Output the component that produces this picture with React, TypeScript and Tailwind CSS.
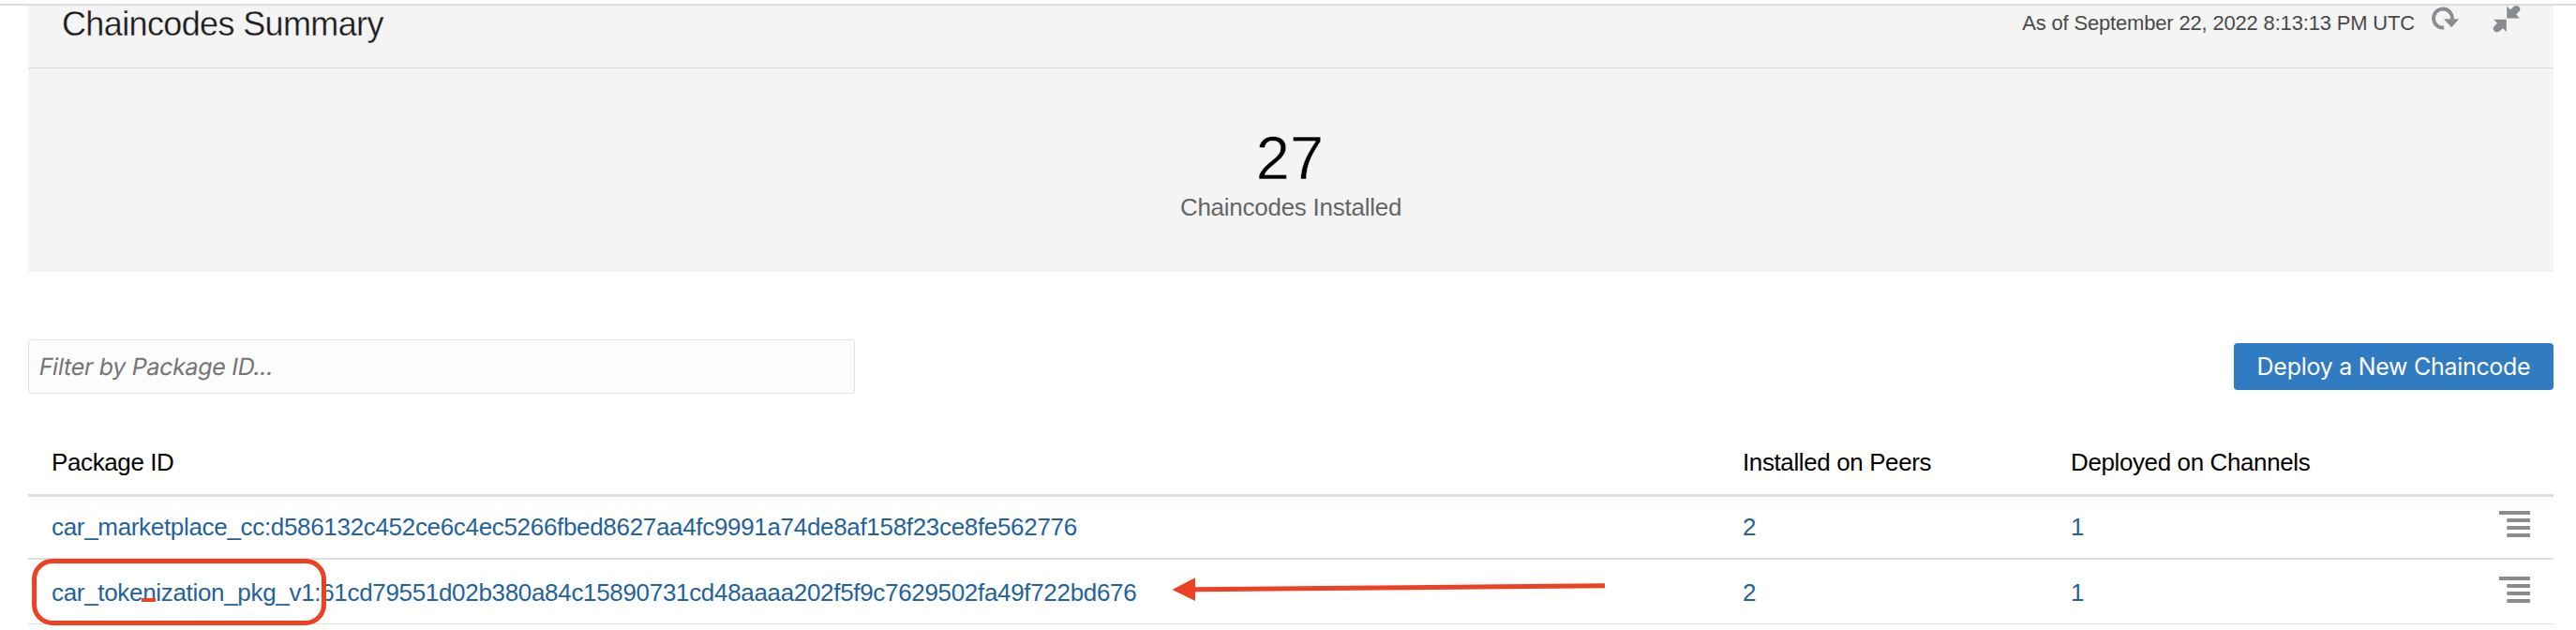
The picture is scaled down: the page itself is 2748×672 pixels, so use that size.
import React from "react";

const rows = [
  {
    id: "car_marketplace_cc:d586132c452ce6c4ec5266fbed8627aa4fc9991a74de8af158f23ce8fe562776",
    peers: 2,
    channels: 1,
    rowClass: "h-[67px] border-b-2 border-[#dfdfdf] pt-[17px]",
  },
  {
    id: "car_tokenization_pkg_v1:61cd79551d02b380a84c15890731cd48aaaa202f5f9c7629502fa49f722bd676",
    peers: 2,
    channels: 1,
    rowClass: "h-[69px] border-b border-[#dfdfdf] pt-5",
  },
];

function RefreshIcon() {
  return (
    <svg className="h-[26px] w-[30px] shrink-0" viewBox="0 0 30 26" fill="none">
      <path d="M13.2 23.5A10 10 0 1 1 22 14.5" stroke="#898d92" strokeWidth="3.9" />
      <path d="M13 14.3H29L21.2 23.2Z" fill="#898d92" />
    </svg>
  );
}

function CollapseIcon() {
  return (
    <svg className="h-[29px] w-[30px] shrink-0" viewBox="0 0 30 29" fill="#898d92">
      <path d="M15.2 .8L18.8 4.2L23 .7Q25-.6 27.6 .8Q30.2 2.6 29 5.4L25.2 9.6L28.8 13.5H15.2Z" />
      <path d="M14.8 28L11 24.2L7 27.6Q4.8 29 2.2 27.4Q-.2 25.4 1 22.8L5 18.8L1.2 14.8H14.8Z" />
    </svg>
  );
}

function MenuIcon() {
  return (
    <svg className="-mt-[2px] h-[29px] w-[33px]" viewBox="0 0 33 29" fill="#898d92">
      <rect x="0" y="0" width="33" height="4" />
      <rect x="8.3" y="8" width="24.7" height="4" />
      <rect x="8.3" y="16" width="24.7" height="4" />
      <rect x="8.3" y="24" width="24.7" height="4" />
    </svg>
  );
}

export default function App() {
  return (
    <div className="relative flex h-[672px] w-[2748px] flex-col overflow-hidden bg-white pt-1 font-['Liberation_Sans',Arial,sans-serif] text-[26px] leading-[30px] text-black">
      <div className="h-[2px] w-full shrink-0 bg-[#dcdcdc]" />

      <section className="ml-[30px] h-[284px] w-[2694px] shrink-0 bg-[#f4f4f4]">
        <header className="flex h-[67px] items-start border-b border-[#d6dfe6]">
          <h1 className="pl-9 text-[36px] leading-[39px] tracking-[-0.63px] text-[#1c1c1c] [-webkit-text-stroke:0.3px_#f4f4f4]">
            Chaincodes Summary
          </h1>
          <div className="ml-auto flex items-start pr-[35px]">
            <span className="text-[22px] leading-[37px] tracking-[-0.176px] text-[#4a4a4a]">
              As of September 22, 2022 8:13:13 PM UTC
            </span>
            <span className="ml-[18px] flex">
              <RefreshIcon />
            </span>
            <span className="ml-[35px] flex">
              <CollapseIcon />
            </span>
          </div>
        </header>
        <div className="flex flex-col items-center pt-[60px]">
          <div className="pr-[2px] text-[65px] leading-[72px] [-webkit-text-stroke:0.5px_#f4f4f4]">27</div>
          <div className="leading-[32px] tracking-[-0.259px] text-[#666]">Chaincodes Installed</div>
        </div>
      </section>

      <div className="mt-[72px] ml-[30px] flex h-[58px] w-[2694px] shrink-0 items-center justify-between font-[Inter,sans-serif] text-[25px]">
        <div
          role="textbox"
          className="flex h-[58px] w-[882px] items-center rounded-[3px] border border-[#e4e4e4] bg-[#fcfcfc] pl-[11px] text-[#757575]"
        >
          <span className="inline-block -skew-x-[10deg] tracking-[-0.3px]">Filter by Package ID...</span>
        </div>
        <button className="h-[50px] w-[341px] rounded-[4px] bg-[#317bc3] tracking-[-0.29px] whitespace-nowrap text-white">
          Deploy a New Chaincode
        </button>
      </div>

      <div className="ml-[30px] w-[2694px]">
        <div className="flex h-[110px] border-b-[3px] border-[#d9dfe4] pt-[58px] pl-[25px] tracking-[-0.39px]">
          <div className="w-[1804px]">Package ID</div>
          <div className="w-[350px]">Installed on Peers</div>
          <div>Deployed on Channels</div>
        </div>
        {rows.map((row) => (
          <div
            key={row.id}
            className={`flex pr-[25px] pl-[25px] tracking-[-0.32px] text-[#24629c] ${row.rowClass}`}
          >
            <div className="w-[1804px]">{row.id}</div>
            <div className="w-[350px]">{row.peers}</div>
            <div>{row.channels}</div>
            <div className="ml-auto">
              <MenuIcon />
            </div>
          </div>
        ))}
      </div>

      <div className="absolute top-[596px] left-[34px] h-[71px] w-[314px] rounded-[22px] border-[5px] border-[#ee4023]" />
      <div className="absolute top-[638px] left-[151px] h-1 w-[15px] bg-[#ee4023]" />
      <svg className="absolute top-[610px] left-[1250px] h-9 w-[464px]" viewBox="0 0 464 36">
        <path d="M0.5 19L25 6.3V31Z" fill="#ee4023" />
        <path d="M24 18.8L462 14.8" stroke="#ee4023" strokeWidth="5" />
      </svg>
    </div>
  );
}
